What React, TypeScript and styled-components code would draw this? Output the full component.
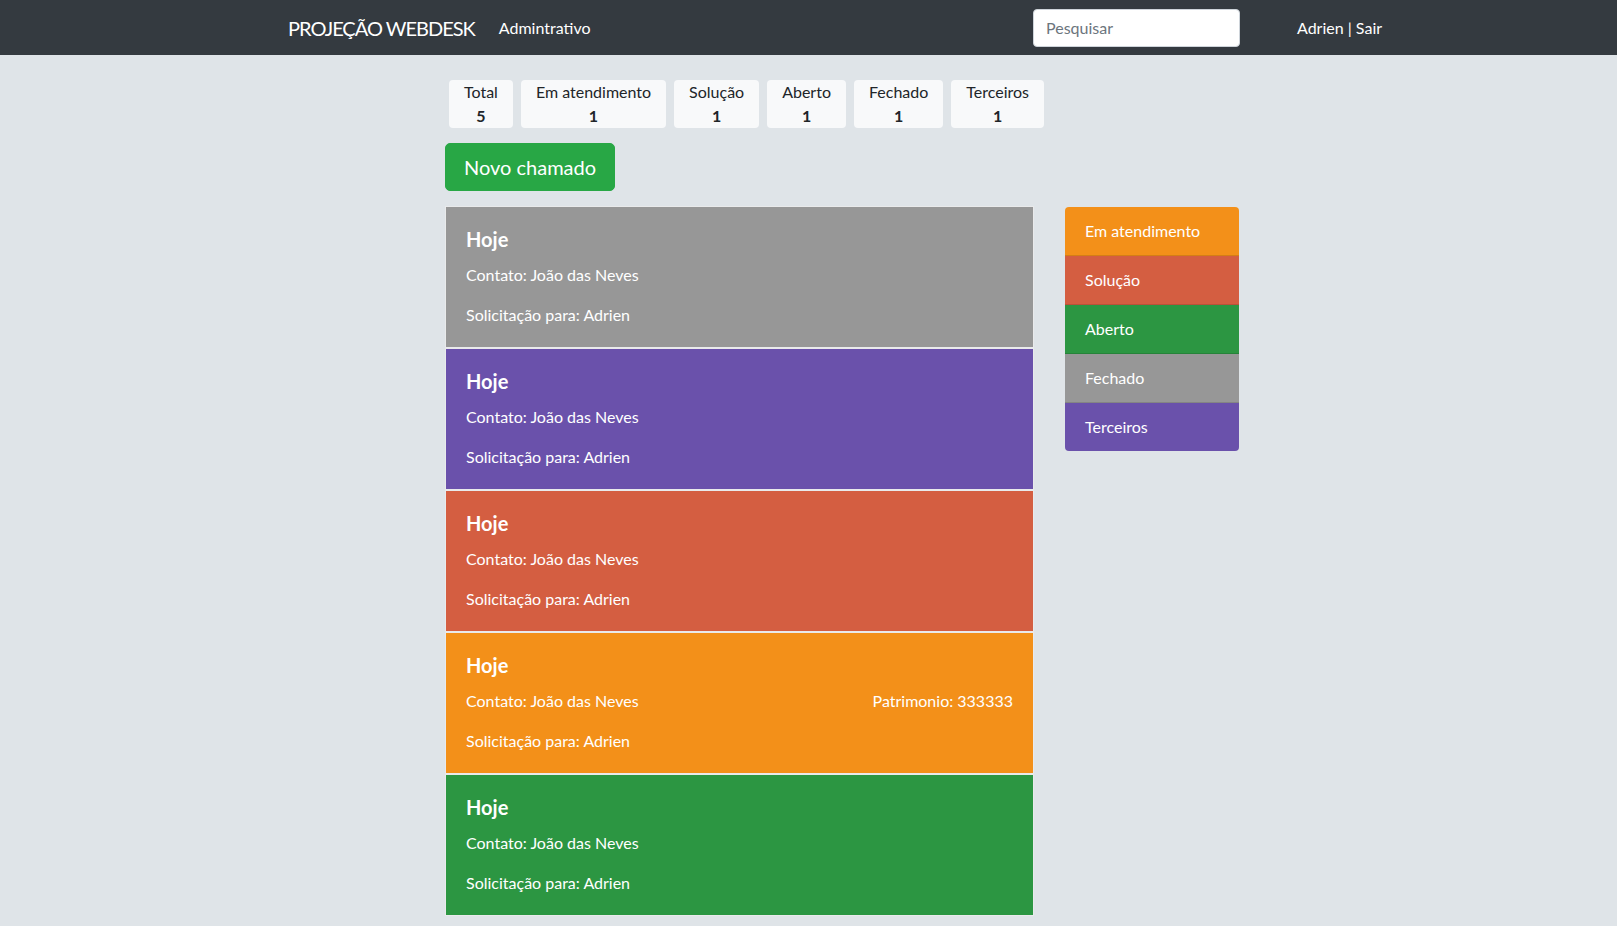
import React from "react";
import styled, { createGlobalStyle } from "styled-components";

const GlobalStyle = createGlobalStyle`
  * { box-sizing: border-box; }
  html, body { margin: 0; padding: 0; }
  body {
    background: #dfe4e8;
    font-family: Lato, "Open Sans", sans-serif;
    font-size: 16px;
    line-height: 1.5;
    color: #212529;
  }
`;

const Nav = styled.nav`
  height: 55px;
  background: #343a40;
  display: flex;
  align-items: center;
  padding: 0 235px 0 288px;
`;

const Brand = styled.a`
  font-size: 20px;
  color: #fff;
  line-height: 30px;
  letter-spacing: -1px;
  margin-right: 24px;
  white-space: nowrap;
`;

const NavLink = styled.a`
  color: #fff;
  font-size: 16px;
  white-space: nowrap;
`;

const Spacer = styled.div`
  flex: 1;
`;

const RightGroup = styled.div`
  width: 349px;
  display: flex;
  align-items: center;
  gap: 57px;
`;

const Search = styled.input`
  width: 207px;
  height: 38px;
  border: 1px solid #ced4da;
  border-radius: 4px;
  padding: 6px 12px;
  font-family: inherit;
  font-size: 16px;
  color: #495057;
  background: #fff;
  &::placeholder { color: #6c757d; }
`;

const UserLink = styled.a`
  color: #fff;
  white-space: nowrap;
`;

const Main = styled.main`
  padding: 25px 0 40px 445px;
`;

const StatsRow = styled.div`
  display: flex;
  gap: 8px;
  padding-left: 4px;
`;

const Stat = styled.div`
  background: #f8f9fa;
  border-radius: 4px;
  padding: 0 15px;
  height: 48px;
  text-align: center;
  line-height: 24px;
`;

const StatLabel = styled.div`
  font-size: 16px;
`;

const StatValue = styled.div`
  font-size: 16px;
  font-weight: 700;
`;

const NewButton = styled.button`
  margin: 15px 0 15px;
  height: 48px;
  padding: 8px 18px;
  font-family: inherit;
  font-size: 20px;
  line-height: 30px;
  color: #fff;
  background: #28a745;
  border: 1px solid #28a745;
  border-radius: 5px;
  cursor: pointer;
`;

const ContentRow = styled.div`
  display: flex;
  align-items: flex-start;
  gap: 31px;
`;

const Cards = styled.div`
  width: 589px;
  display: flex;
  flex-direction: column;
`;

const Card = styled.div<{ $bg: string }>`
  background: ${(p) => p.$bg};
  border: 1px solid #e9eaeb;
  padding: 20px;
  color: #fff;
`;

const CardTitle = styled.h5`
  margin: 0 0 12px;
  font-size: 20px;
  font-weight: 700;
  line-height: 24px;
`;

const CardLine = styled.div`
  display: flex;
  justify-content: space-between;
  line-height: 24px;
  margin-bottom: 16px;
  &:last-child { margin-bottom: 0; }
`;

const Sidebar = styled.div`
  width: 174px;
  margin-top: 1px;
  border-radius: 4px;
  overflow: hidden;
  display: flex;
  flex-direction: column;
`;

const SideItem = styled.a<{ $bg: string }>`
  display: block;
  background: ${(p) => p.$bg};
  color: #fff;
  padding: 12px 20px 12px 20px;
  height: 49px;
  line-height: 24px;
  border-bottom: 1px solid rgba(0, 0, 0, 0.125);
  &:last-child { border-bottom: none; height: 48px; }
`;

const COLORS = {
  gray: "#979797",
  purple: "#6a51ab",
  red: "#d45e41",
  orange: "#f39019",
  green: "#2c9642",
};

const stats = [
  { label: "Total", value: 5 },
  { label: "Em atendimento", value: 1 },
  { label: "Solução", value: 1 },
  { label: "Aberto", value: 1 },
  { label: "Fechado", value: 1 },
  { label: "Terceiros", value: 1 },
];

const tickets = [
  { bg: COLORS.gray },
  { bg: COLORS.purple },
  { bg: COLORS.red },
  { bg: COLORS.orange, patrimonio: "333333" },
  { bg: COLORS.green },
];

const sideItems = [
  { label: "Em atendimento", bg: COLORS.orange },
  { label: "Solução", bg: COLORS.red },
  { label: "Aberto", bg: COLORS.green },
  { label: "Fechado", bg: COLORS.gray },
  { label: "Terceiros", bg: COLORS.purple },
];

export default function App() {
  return (
    <>
      <GlobalStyle />
      <Nav>
        <Brand>PROJEÇÃO WEBDESK</Brand>
        <NavLink>Admintrativo</NavLink>
        <Spacer />
        <RightGroup>
          <Search placeholder="Pesquisar" />
          <UserLink>Adrien | Sair</UserLink>
        </RightGroup>
      </Nav>
      <Main>
        <StatsRow>
          {stats.map((s) => (
            <Stat key={s.label}>
              <StatLabel>{s.label}</StatLabel>
              <StatValue>{s.value}</StatValue>
            </Stat>
          ))}
        </StatsRow>
        <NewButton>Novo chamado</NewButton>
        <ContentRow>
          <Cards>
            {tickets.map((t, i) => (
              <Card key={i} $bg={t.bg}>
                <CardTitle>Hoje</CardTitle>
                <CardLine>
                  <span>Contato: João das Neves</span>
                  {t.patrimonio && <span>Patrimonio: {t.patrimonio}</span>}
                </CardLine>
                <CardLine>
                  <span>Solicitação para: Adrien</span>
                </CardLine>
              </Card>
            ))}
          </Cards>
          <Sidebar>
            {sideItems.map((s) => (
              <SideItem key={s.label} $bg={s.bg}>
                {s.label}
              </SideItem>
            ))}
          </Sidebar>
        </ContentRow>
      </Main>
    </>
  );
}
